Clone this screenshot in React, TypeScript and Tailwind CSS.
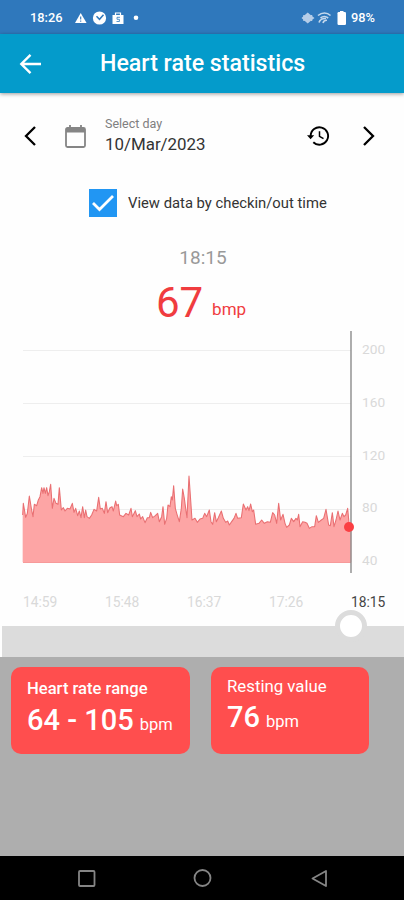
import { ReactNode } from "react";

const font = "font-['Roboto','Noto_Sans',sans-serif]";

// trace samples, drawn at a third of their size
const trace =
  "38,150 40,115 47,157 52,145 58,93 64,130 69,155 73,118 80,122 85,105 90,95 95,68 99,85 102,68 106,85 110,68 114,92 118,80 122,58 127,130 132,100 138,115 144,118 148,68 154,135 160,128 165,138 172,130 180,132 187,115 192,142 197,130 203,152 208,138 213,158 218,125 223,158 227,135 231,155 238,160 245,150 252,133 260,138 266,97 271,132 277,130 283,145 288,110 293,143 300,128 306,125 310,138 317,108 320,122 325,118 329,150 340,155 348,145 356,150 363,130 367,155 376,137 381,155 388,147 392,162 398,155 405,173 412,158 418,158 422,142 428,158 436,152 443,145 448,170 455,155 459,125 464,178 470,160 474,120 480,125 484,95 487,105 491,62 496,130 501,148 508,170 514,130 518,72 523,100 527,130 531,158 537,33 543,120 546,165 555,160 562,172 570,162 578,160 584,145 590,155 598,135 603,170 608,178 614,143 619,170 625,158 634,138 640,160 647,172 653,168 658,180 665,170 672,160 678,145 683,160 694,158 700,117 708,135 713,125 717,137 722,117 727,140 731,135 737,178 747,175 755,165 763,175 772,170 781,172 788,143 794,150 800,175 806,115 812,165 819,148 825,175 830,187 838,180 844,160 851,170 858,160 862,165 866,148 870,185 878,170 885,172 891,175 898,190 906,185 914,185 919,152 925,172 934,165 941,160 948,133 956,180 961,182 967,143 972,185 978,165 984,138 990,165 997,145 1002,155 1007,150 1013,130 1018,185";

const StatusBar = () => (
  <div className="flex h-[34px] items-center bg-[#2f78bc] pl-[30px] pr-[29px] pt-0.5 text-[12.8px] font-medium text-white">
    <span className="w-[45px]">18:26</span>
    <svg width="66" height="16" viewBox="0 0 66 16" fill="#fff">
      <path d="M5.7 3 11.6 13H0Z" />
      <path d="M5.7 6.5v3M5.7 10.5v1.2" stroke="#2f78bc" strokeWidth="1.1" />
      <circle cx="24.5" cy="8" r="6.6" />
      <path d="m21.5 6.3 3 3 4-4.5" stroke="#2f78bc" strokeWidth="1.5" fill="none" />
      <path d="M37.5 5h11v9h-11z" />
      <path d="M40.5 5V3h5v2" stroke="#fff" strokeWidth="1.2" fill="none" />
      <path d="M45 7.3h-3v2h2.4v2.2H41.5" stroke="#2f78bc" strokeWidth=".8" fill="none" />
      <circle cx="61" cy="7.7" r="2.3" />
    </svg>
    <svg className="ml-auto mr-[3px]" width="47" height="16" viewBox="0 0 47 16">
      <path d="M.5 8 3 5.800 6.700 2.500l3.800 3.300L13.500 8l-3 2.200-3.800 3.300L3 10.200Z" fill="#b5cde8" />
      <path d="M3 5v6M10.500 5v6" stroke="#b5cde8" strokeWidth="1.5" />
      <path
        d="M17 5.500c4-3.200 9-3.200 12.500 0M19.500 8c2.600-2 5-2 7.700 0M18 12.500c1-3 3-4.300 7-4M22 13c.5-1.800 1.500-2.800 4-2.700"
        stroke="#c4d8ed"
        strokeWidth="1.6"
        fill="none"
      />
      <rect x="36.5" y="2" width="8.5" height="13" rx="1.2" fill="#fff" />
      <path d="M39 1h3.500v2H39Z" fill="#fff" />
    </svg>
    <span>98%</span>
  </div>
);

const Header = () => (
  <div className="relative z-10 flex h-[59px] items-center bg-[#049bcb] text-white shadow-[0_1px_4px_rgba(0,0,0,0.4)]">
    <svg className="ml-[19px]" width="23" height="22" viewBox="0 0 23 22" fill="none" stroke="#fff" strokeWidth="2.4">
      <path d="M22 11H2.500M11.500 1.800 2.300 11l9.200 9.200" />
    </svg>
    <h1 className="ml-[58px] whitespace-nowrap text-[23.2px] font-medium">Heart rate statistics</h1>
  </div>
);

const DayPicker = () => (
  <div className="flex h-[46px] items-center pl-6 pr-[29px] text-black">
    <svg width="12" height="20" viewBox="0 0 12 20" fill="none" stroke="currentColor" strokeWidth="2.3">
      <path d="M11 1 2 10l9 9" />
    </svg>
    <svg className="ml-7" width="23" height="25" viewBox="0 0 23 25" fill="none" stroke="#858585" strokeWidth="1.8">
      <rect x="2" y="4" width="19" height="19" rx="1.5" />
      <path d="M2 6.5h19" strokeWidth="4" />
      <path d="M6 1v4M17 1v4" />
    </svg>
    <div className="ml-[18px] flex flex-col">
      <span className="text-[12.5px] leading-[17px] text-[#808080] -mt-0.5">Select day</span>
      <span className="mt-px text-[16.9px] leading-[23px] text-[#333]">10/Mar/2023</span>
    </div>
    <svg className="ml-auto" width="23" height="22" viewBox="0 0 23 22" fill="none" stroke="currentColor" strokeWidth="1.9">
      <path d="M3.700 11a8.700 8.700 0 1 1 2.600 6.200" />
      <path d="M0 10.300h7.200l-3.600 4Z" fill="currentColor" stroke="none" />
      <path d="M12.500 6.300v5l4 2.300" strokeWidth="1.5" />
    </svg>
    <svg className="ml-8" width="13" height="20" viewBox="0 0 13 20" fill="none" stroke="currentColor" strokeWidth="2.3">
      <path d="m2 1 9 9-9 9" />
    </svg>
  </div>
);

const Chart = () => (
  <div className="flex h-[243px]">
    <svg width="357" height="243" viewBox="0 0 357 243">
      <path d="M23 20.5h328M23 73.5h328M23 126.5h328M23 179.5h328" stroke="#eeeeee" />
      <g transform="translate(10 135) scale(.33333)">
        <polygon points={`38,292 ${trace} 1024,190 1024,292`} fill="#fda5a5" />
        <polyline points={trace} fill="none" stroke="#e96f72" strokeWidth="3.2" strokeLinejoin="round" />
      </g>
      <path d="M23 232.5h328" stroke="#f79a9a" />
      <path d="M351 1v242" stroke="#8b8b8b" strokeWidth="1.4" />
      <circle cx="349" cy="197" r="5" fill="#fb3f43" />
    </svg>
    <div className="flex flex-col pl-[5px] pt-[7px] text-[13.7px] leading-[25px] text-[#d9d9d9]">
      {[200, 160, 120, 80, 40].map((n) => (
        <span key={n} className="mb-[27.8px]">{n}</span>
      ))}
    </div>
  </div>
);

const Card = ({ title, value, className }: { title: string; value: ReactNode; className: string }) => (
  <div className={`h-[87px] rounded-[10px] bg-[#ff4e4e] text-white ${className}`}>
    <p className="leading-[22px]">{title}</p>
    <p className="whitespace-nowrap leading-10">
      <span className="text-[29px] font-medium">{value}</span>
      <span className="ml-[6px] text-[16.5px]">bpm</span>
    </p>
  </div>
);

export default function App() {
  return (
    <div className={`flex h-[900px] w-[404px] flex-col overflow-hidden bg-[#fefefe] ${font}`}>
      <StatusBar />
      <Header />
      <div className="pt-5">
        <DayPicker />
      </div>
      <div className="mt-[30px] flex h-7 items-center pl-[89px]">
        <div className="flex size-7 items-center justify-center bg-[#2196f3]">
          <svg width="22" height="18" viewBox="0 0 22 18" fill="none" stroke="#fff" strokeWidth="2.8">
            <path d="m1 9 6.500 6.500L21 2" />
          </svg>
        </div>
        <span className="ml-[11px] text-[14.8px] text-[#333]">View data by checkin/out time</span>
      </div>
      <p className="mt-[27px] h-7 pl-0.5 text-center text-[19px] leading-7 text-[#999]">18:15</p>
      <div className="flex h-[58px] items-baseline justify-center pr-[2px] text-[#f03c3f]">
        <span className="text-[42px] leading-[62px]">67</span>
        <span className="ml-[9px] -translate-y-0.5 text-[17px]">bmp</span>
      </div>
      <Chart />
      <div className="flex h-[53px] pl-[23px] pt-[19px] text-[13.8px] leading-5 text-[#d9d9d9]">
        <span className="w-[82px]">14:59</span>
        <span className="w-[82px]">15:48</span>
        <span className="w-[82px]">16:37</span>
        <span className="w-[82px]">17:26</span>
        <span className="text-[#444]">18:15</span>
      </div>
      <div className="relative ml-0.5 h-[31px] bg-[#dcdcdc]">
        <div className="absolute -top-4 left-[333px] size-8 rounded-full border-[5px] border-[#dcdcdc] bg-white" />
      </div>
      <div className="flex flex-1 gap-[21px] bg-[#aeaeae] pl-[11px] pt-[10px]">
        <Card
          title="Heart rate range"
          value="64 - 105"
          className="w-[179px] pl-4 pt-[11px] text-[16.6px] [&>p:first-child]:font-medium"
        />
        <Card title="Resting value" value="76" className="w-[158px] pl-4 pt-2 text-[16.8px]" />
      </div>
      <div className="h-11 bg-black">
        <svg width="404" height="44" viewBox="0 0 404 44" fill="none" stroke="#858585" strokeWidth="1.8" strokeLinejoin="round">
          <rect x="79" y="15" width="15.5" height="15" rx="1" />
          <circle cx="202.5" cy="22" r="8" />
          <path d="M326 15v15l-13.500-7.500Z" />
        </svg>
      </div>
    </div>
  );
}
